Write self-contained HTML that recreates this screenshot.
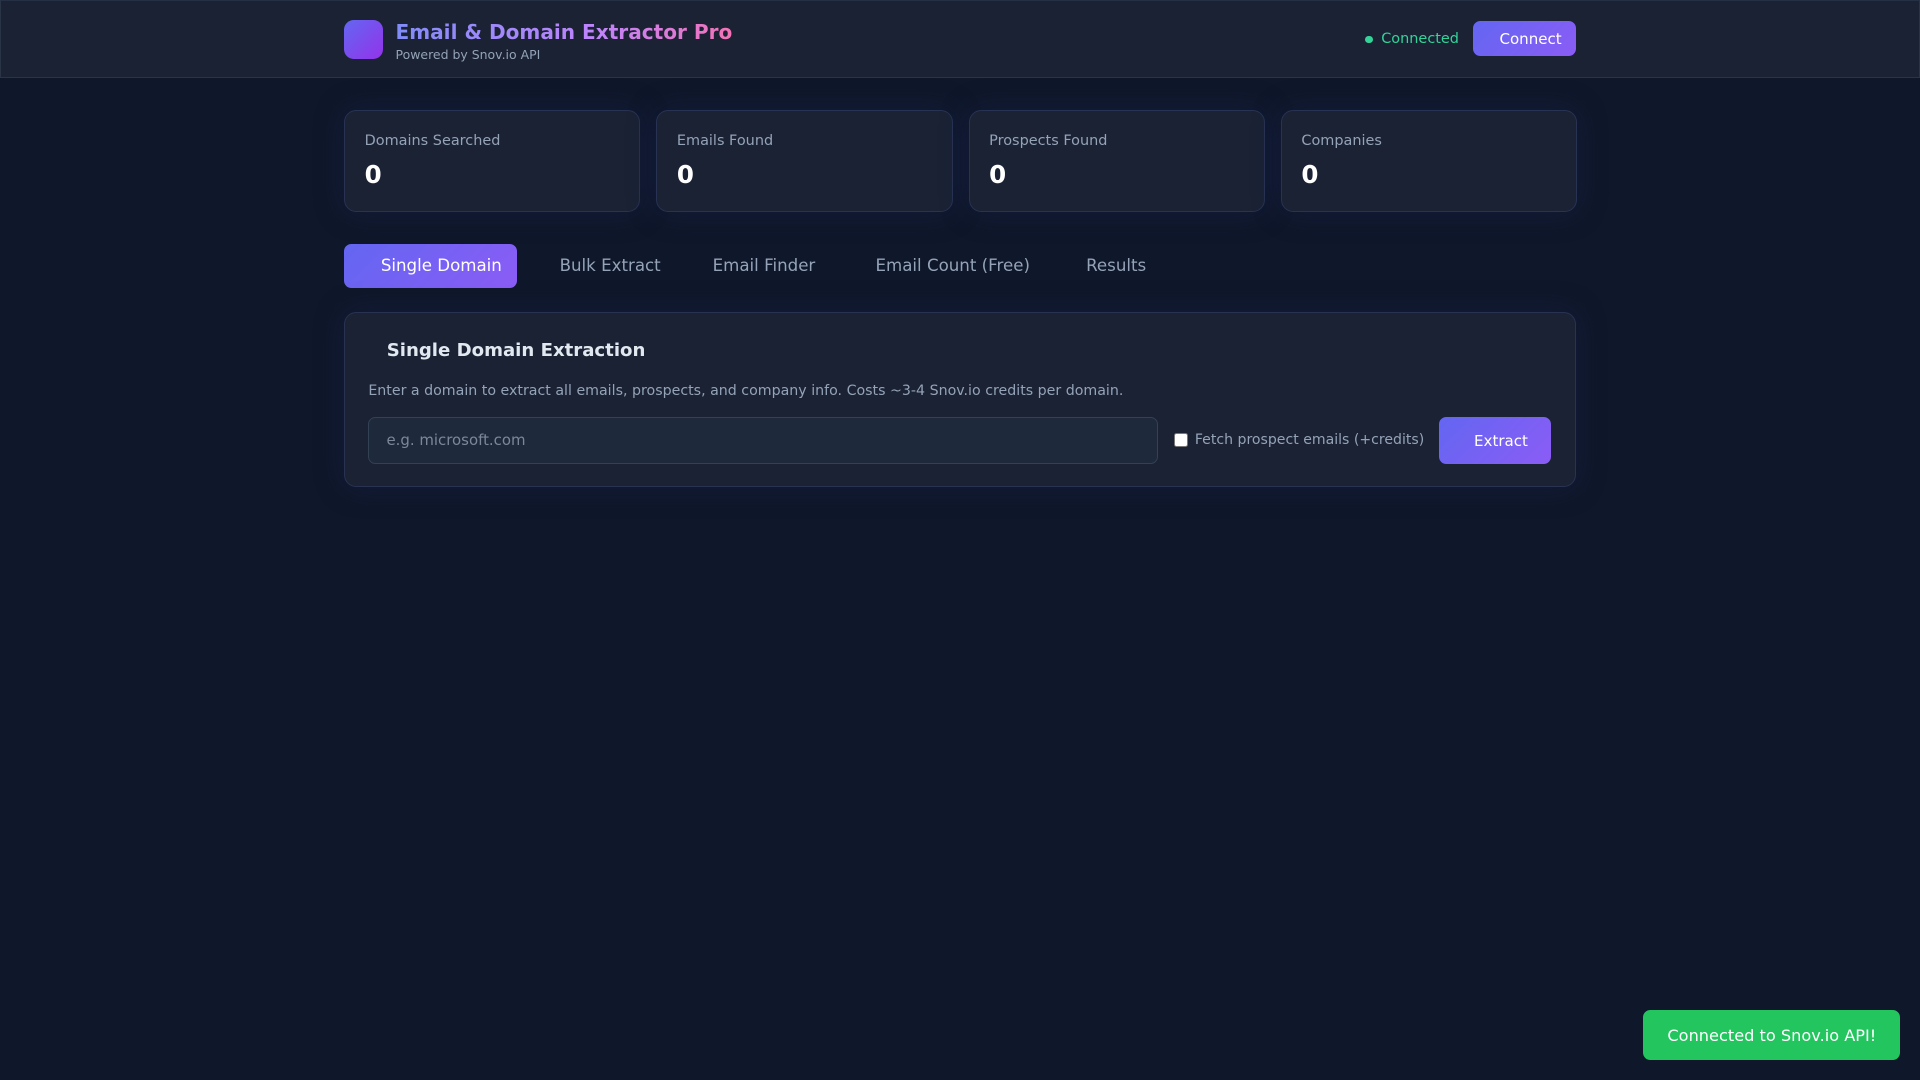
<!DOCTYPE html>
<html><head><meta charset="utf-8"><style>
html{zoom:1.22449}
*{box-sizing:border-box;margin:0;padding:0}
body{width:1568px;height:882px;background:#0f172a;font-family:"DejaVu Sans","Liberation Sans",sans-serif;position:relative;overflow:hidden;color:#e2e8f0}
.hdr{position:absolute;left:0;top:0;width:1568px;height:64px;background:#1a2234;border:1px solid #2a3447;border-top-color:#253045}
.logo{position:absolute;left:281px;top:16px;width:32px;height:32px;border-radius:8px;background:linear-gradient(135deg,#6366f1,#9333ea)}
.title{position:absolute;left:323px;top:16px;font-size:16.4px;font-weight:bold;background:linear-gradient(90deg,#818cf8,#c084fc 60%,#f472b6);-webkit-background-clip:text;color:transparent;white-space:nowrap}
.sub{position:absolute;left:323px;top:38px;font-size:10.2px;color:#94a3b8}
.dot{position:absolute;left:1115px;top:29px;width:6px;height:6px;border-radius:50%;background:#34d399}
.conn{position:absolute;left:1128px;top:25px;font-size:11.8px;color:#34d399}
.btn{position:absolute;background:linear-gradient(135deg,#6366f1,#8b5cf6);color:#fff;border-radius:6px;font-size:12.3px;display:flex;align-items:center;justify-content:center}
.stat{position:absolute;top:90px;width:242px;height:83px;background:#1a2234;border:1px solid #283252;border-radius:10px;box-shadow:0 0 24px rgba(30,40,90,.35)}
.stat .l{position:absolute;left:16px;top:18px;font-size:11.8px;color:#94a3b8}
.stat .n{position:absolute;left:16px;top:40px;font-size:20px;font-weight:bold;color:#fff}
.tab{position:absolute;top:199px;height:36px;font-size:13.6px;color:#94a3b8;line-height:36px;white-space:nowrap}
.card{position:absolute;left:281px;top:255px;width:1006px;height:143px;background:#1a2234;border:1px solid #283252;border-radius:10px;box-shadow:0 0 24px rgba(30,40,90,.35)}
</style></head><body>
<div class="hdr"></div>
<div class="logo"></div>
<div class="title">Email &amp; Domain Extractor Pro</div>
<div class="sub">Powered by Snov.io API</div>
<div class="dot"></div>
<div class="conn">Connected</div>
<div class="btn" style="left:1203px;top:17px;width:84px;height:29px;padding-left:10px">Connect</div>

<div class="stat" style="left:281px"><div class="l">Domains Searched</div><div class="n">0</div></div>
<div class="stat" style="left:536px"><div class="l">Emails Found</div><div class="n">0</div></div>
<div class="stat" style="left:791px"><div class="l">Prospects Found</div><div class="n">0</div></div>
<div class="stat" style="left:1046px"><div class="l">Companies</div><div class="n">0</div></div>

<div class="tab" style="left:281px;width:141px;border-radius:6px;background:linear-gradient(135deg,#6366f1,#8b5cf6);color:#fff;padding-left:30px">Single Domain</div>
<div class="tab" style="left:457px">Bulk Extract</div>
<div class="tab" style="left:582px">Email Finder</div>
<div class="tab" style="left:715px">Email Count (Free)</div>
<div class="tab" style="left:887px">Results</div>

<div class="card">
<div style="position:absolute;left:34px;top:22px;font-size:14.8px;font-weight:bold;color:#e2e8f0">Single Domain Extraction</div>
<div style="position:absolute;left:19px;top:57px;font-size:11.6px;color:#94a3b8">Enter a domain to extract all emails, prospects, and company info. Costs ~3-4 Snov.io credits per domain.</div>
<div style="position:absolute;left:19px;top:85px;width:645px;height:38px;background:#1e293b;border:1px solid #334155;border-radius:6px;font-size:12.2px;color:#7c8799;line-height:36px;padding-left:14px">e.g. microsoft.com</div>
<div style="position:absolute;left:677px;top:98px;width:11px;height:11px;background:#fff;border-radius:2px;border:1px solid #777"></div>
<div style="position:absolute;left:694px;top:97px;font-size:11.5px;color:#94a3b8">Fetch prospect emails (+credits)</div>
<div class="btn" style="left:893px;top:85px;width:92px;height:38px;padding-left:10px">Extract</div>
</div>

<div style="position:absolute;left:1342px;top:825px;width:210px;height:41px;background:#22c55e;border-radius:6px;color:#fff;font-size:13.2px;display:flex;align-items:center;justify-content:center">Connected to Snov.io API!</div>
</body></html>
